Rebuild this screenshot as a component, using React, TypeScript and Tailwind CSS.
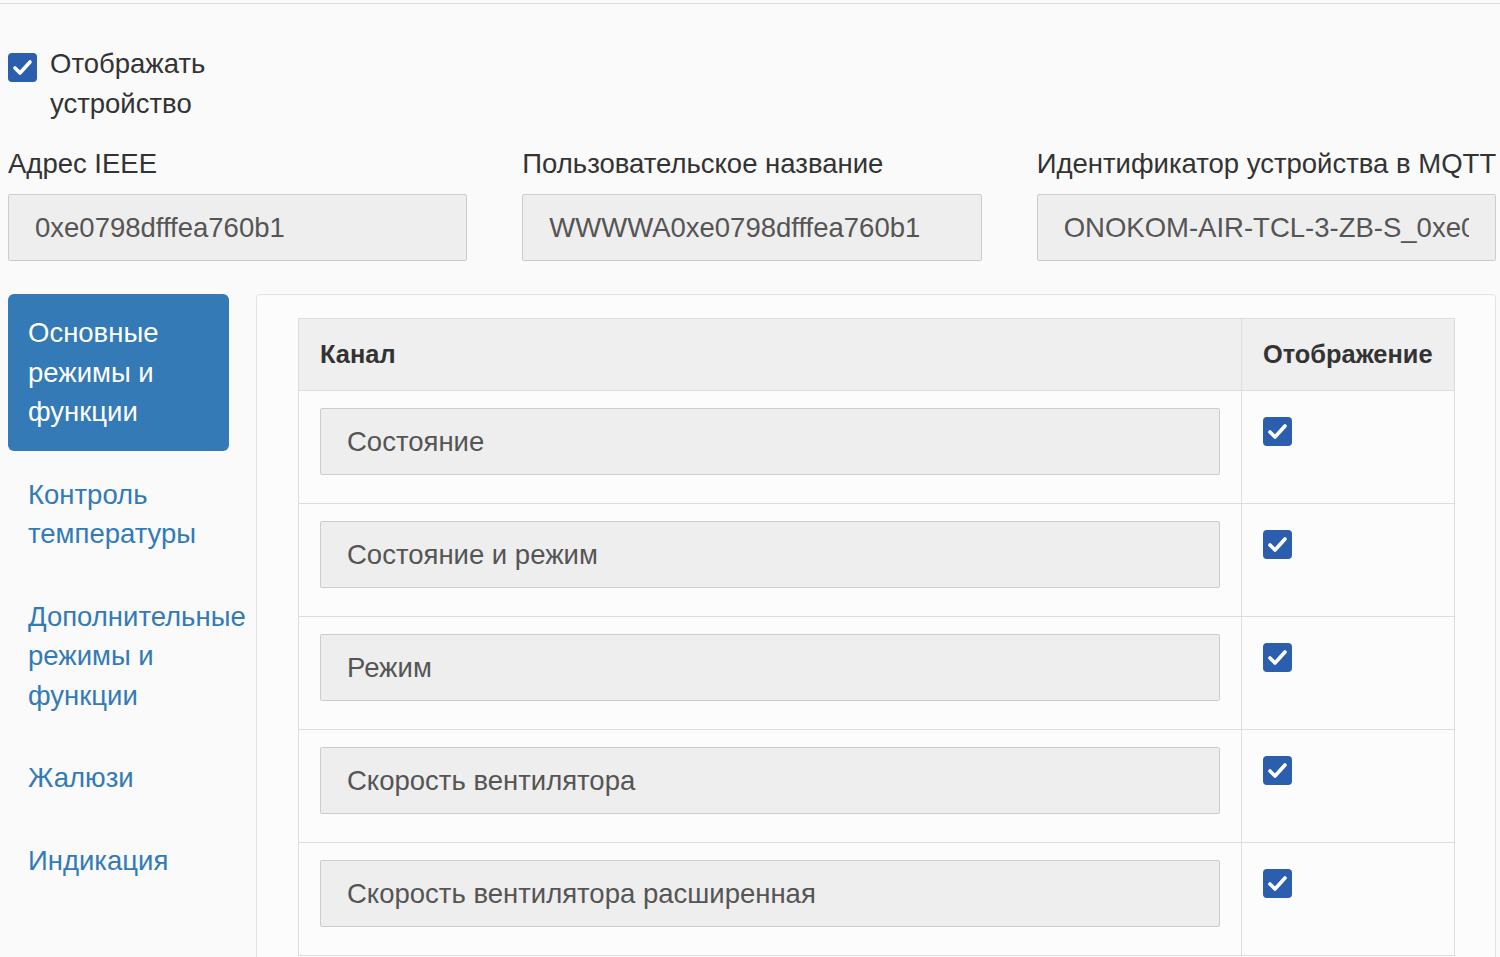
import React from 'react';

const FONT = "font-['Liberation_Sans',Arial,sans-serif]";

const Check: React.FC<{ className?: string }> = ({ className = '' }) => (
  <span
    className={`flex h-[29px] w-[29px] shrink-0 items-center justify-center rounded-[4px] bg-[#2c5eae] ${className}`}
  >
    <svg width="29" height="29" viewBox="0 0 29 29" fill="none">
      <path d="M7 15l5 5 10-11" stroke="white" strokeWidth="3.6" strokeLinecap="round" strokeLinejoin="round" />
    </svg>
  </span>
);

const fields = [
  { label: 'Адрес IEEE', value: '0xe0798dfffea760b1' },
  { label: 'Пользовательское название', value: 'WWWWA0xe0798dfffea760b1' },
  { label: 'Идентификатор устройства в MQTT', value: 'ONOKOM-AIR-TCL-3-ZB-S_0xe0798dfffea760b1' },
];

const tabs = [
  'Основные режимы и функции',
  'Контроль температуры',
  'Дополнительные режимы и функции',
  'Жалюзи',
  'Индикация',
];

const channels = [
  'Состояние',
  'Состояние и режим',
  'Режим',
  'Скорость вентилятора',
  'Скорость вентилятора расширенная',
];

// read-only field, text is clipped inside the padding like a real input
const Field: React.FC<{ value: string; className?: string }> = ({ value, className = '' }) => (
  <div
    className={`flex h-[67px] items-center rounded-[2px] border border-[#cccccc] bg-[#eeeeee] px-[26px] text-[#555] ${className}`}
  >
    <div className="min-w-0 flex-1 overflow-hidden whitespace-nowrap">{value}</div>
  </div>
);

export default function App() {
  return (
    <div className={`${FONT} h-[957px] w-[1500px] overflow-hidden bg-[#fafafa] text-[27.5px] text-[#333]`}>
      <div className="h-[4px] border-b border-[#dcdcdc]" />
      <div className="pl-[8px] pr-[4px]">
        <div className="mt-[40px] flex items-start gap-[13px]">
          <Check className="mt-[9px]" />
          <span className="w-[200px] leading-[40px]">Отображать устройство</span>
        </div>

        <div className="mt-[20px] grid grid-cols-3 gap-x-[55px]">
          {fields.map((f) => (
            <div key={f.label} className="min-w-0">
              <div className="whitespace-nowrap leading-[40px]">{f.label}</div>
              <Field value={f.value} className="mt-[10px]" />
            </div>
          ))}
        </div>

        <div className="mt-[33px] flex">
          <div className="flex w-[221px] shrink-0 flex-col gap-[5px]">
            {tabs.map((t, i) => (
              <div
                key={t}
                className={
                  i === 0
                    ? 'rounded-[6px] bg-[#337ab7] px-[20px] py-[19px] leading-[39.5px] text-white'
                    : 'px-[20px] py-[19px] leading-[39.5px] text-[#337ab7]'
                }
              >
                {t}
              </div>
            ))}
          </div>

          <div className="ml-[27px] h-[700px] flex-1 rounded-[4px] border border-[#e2e2e2] bg-[#fcfcfc] pl-[41px] pr-[40px] pt-[23px]">
            <table className="w-full border-collapse">
              <thead>
                <tr className="bg-[#efefef]">
                  <th className="h-[72px] border border-[#dddddd] px-[21px] text-left text-[25.4px] font-bold">Канал</th>
                  <th className="h-[72px] w-[213px] border border-[#dddddd] px-[21px] text-left text-[25.4px] font-bold">
                    Отображение
                  </th>
                </tr>
              </thead>
              <tbody>
                {channels.map((c) => (
                  <tr key={c}>
                    <td className="border border-[#dddddd] px-[21px] pb-[28px] pt-[17px]">
                      <Field value={c} />
                    </td>
                    <td className="border border-[#dddddd] px-[21px] pt-[26px] align-top">
                      <Check />
                    </td>
                  </tr>
                ))}
              </tbody>
            </table>
          </div>
        </div>
      </div>
    </div>
  );
}
